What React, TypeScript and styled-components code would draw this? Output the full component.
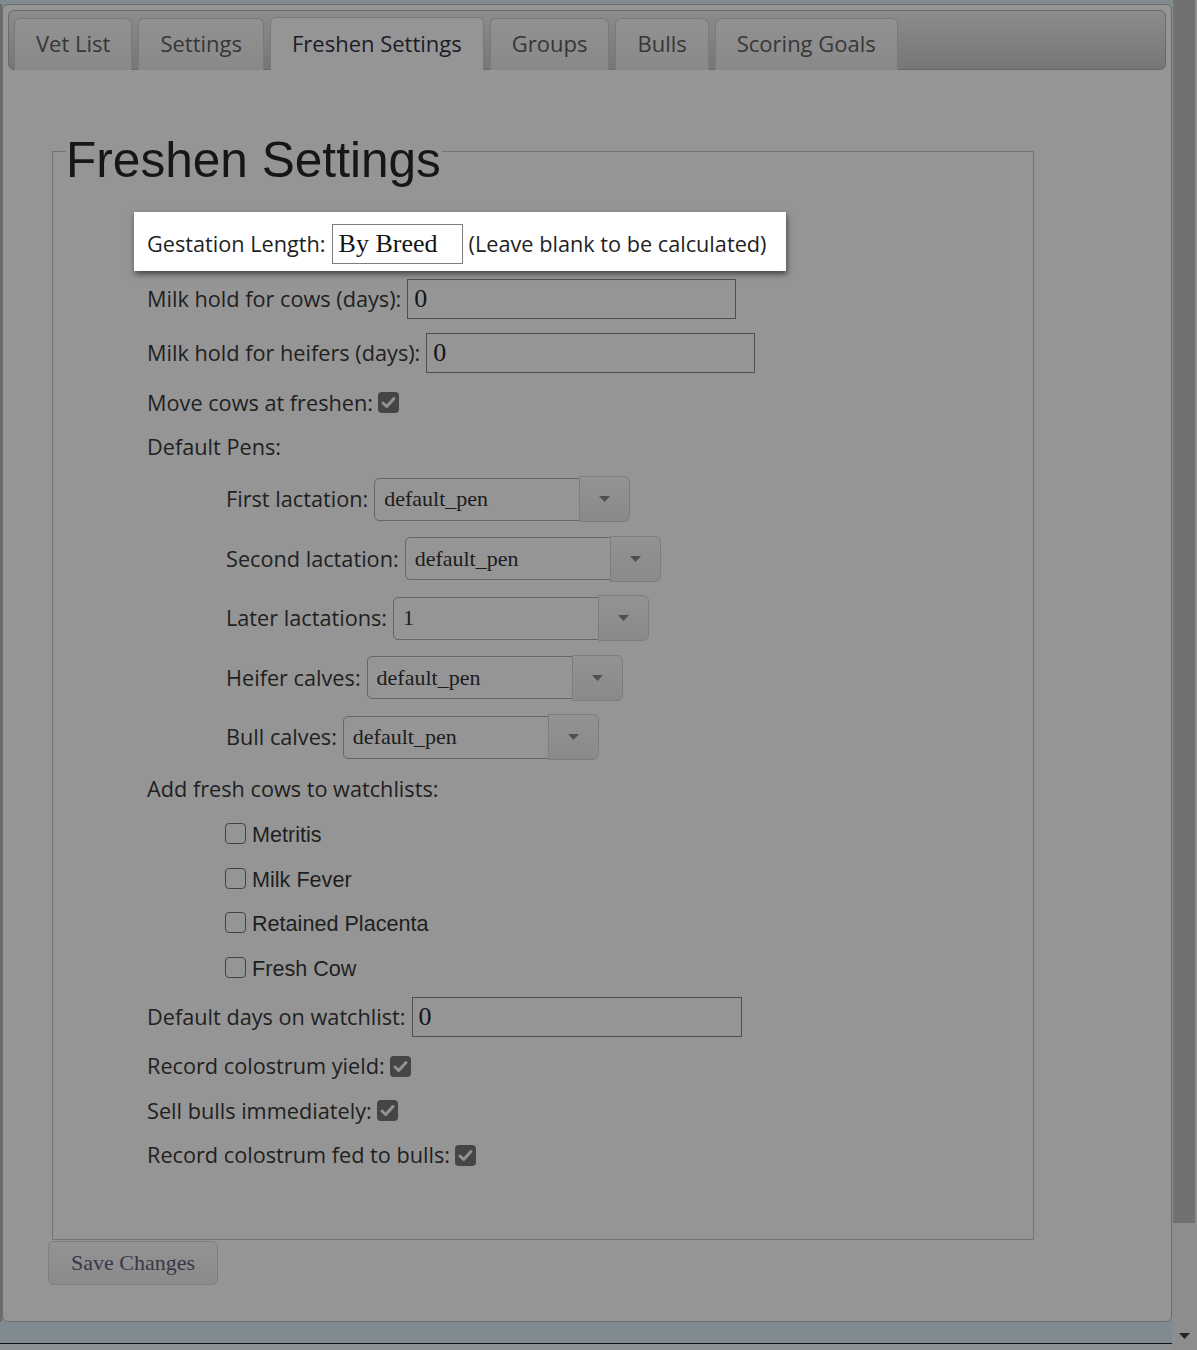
import React from 'react';
import styled, { createGlobalStyle } from 'styled-components';

const GlobalStyle = createGlobalStyle`
  html, body { margin: 0; padding: 0; }
  body {
    background: #808b91;
    font-family: "Open Sans", "Liberation Sans", sans-serif;
    overflow: hidden;
  }
  * { box-sizing: border-box; }
`;

const Screen = styled.div`
  display: grid;
  grid-template-columns: 1172px 25px;
  width: 1197px;
  height: 1350px;
`;

const MainColumn = styled.div`
  display: flex;
  flex-direction: column;
  padding-top: 4px;
`;

const DialogRow = styled.div`
  display: flex;
  height: 1318px;
`;

const LeftStrip = styled.div`
  width: 2px;
  background: #6b6b6b;
`;

const Dialog = styled.div`
  width: 1170px;
  border: 1px solid #6c6c6c;
  border-radius: 6px;
  background: #959595;
  padding: 5px;
  display: flex;
  flex-direction: column;
`;

const BottomGap = styled.div`
  height: 21px;
`;

const BottomLine = styled.div`
  height: 1px;
  background: #111;
`;

const BottomStub = styled.div`
  flex: 1;
  background: #8d9194;
`;

const Scrollbar = styled.div`
  display: flex;
  flex-direction: column;
  background: #8d8d8d;
`;

const Thumb = styled.div`
  height: 1223px;
  margin: 0 2px 0 1px;
  background: #717171;
`;

const ScrollRest = styled.div`
  flex: 1;
  display: flex;
  align-items: flex-end;
  justify-content: center;
  padding-bottom: 11px;
`;

const TabBar = styled.div`
  height: 60px;
  border: 1px solid #6a6a6a;
  border-radius: 6px;
  background: linear-gradient(#8c8c8c, #767676);
  display: flex;
  align-items: flex-end;
  gap: 6px;
  padding-left: 5px;
`;

const Tab = styled.div<{ $active?: boolean }>`
  height: ${(p) => (p.$active ? 53 : 52)}px;
  margin-bottom: -1px;
  padding: ${(p) => (p.$active ? '0 21px 3px' : '0 21px 4px')};
  border: 1px solid #7a7a7a;
  border-bottom: none;
  border-radius: 6px 6px 0 0;
  background: ${(p) => (p.$active ? '#959595' : 'linear-gradient(#919191, #898989)')};
  color: ${(p) => (p.$active ? '#1c1c28' : '#373737')};
  font-size: 22px;
  display: flex;
  align-items: center;
  white-space: nowrap;
`;

const Panel = styled.div`
  display: flex;
  flex-direction: column;
  align-items: flex-start;
  padding-left: 40px;
`;

const Fieldset = styled.fieldset`
  margin: 45.5px 0 0 4px;
  width: 982px;
  min-width: 0;
  padding: 0 0 0 13px;
  border: 1px solid #737373;
`;

const Legend = styled.legend`
  padding: 16px 1px 0 0;
  font-family: "Liberation Sans", Arial, sans-serif;
  font-size: 49.6px;
  line-height: 56px;
  color: #161616;
`;

const Form = styled.div`
  display: flex;
  flex-direction: column;
  align-items: flex-start;
  gap: 14.5px;
  padding: 36.5px 0 69px 81px;
`;

const Highlight = styled.div`
  display: flex;
  align-items: center;
  gap: 6px;
  height: 59px;
  margin: -12px 0 -7px -13px;
  padding: 5px 20px 0 13px;
  background: #fff;
  box-shadow: 1px 3px 6px rgba(0, 0, 0, 0.55);
`;

const TextRow = styled.div`
  display: flex;
  align-items: center;
  gap: 5px;
  height: 30px;
`;

const FieldRow = styled.div`
  display: flex;
  align-items: center;
  gap: 6px;
  height: 40px;
`;

const SelectRow = styled.div`
  display: flex;
  align-items: center;
  gap: 6px;
  height: 45px;
  padding-left: 79px;
`;

const CheckRow = styled.label`
  display: flex;
  align-items: center;
  gap: 6px;
  height: 30px;
  padding-left: 78px;
`;

const Label = styled.span`
  font-size: 21.7px;
  line-height: 30px;
  color: #1f1f1f;
  white-space: nowrap;
`;

const OptionText = styled.span`
  font-family: "Liberation Sans", Arial, sans-serif;
  font-size: 21.6px;
  color: #1f1f1f;
  white-space: nowrap;
  padding-top: 3px;
`;

const TextInput = styled.input<{ $w: number; $white?: boolean }>`
  width: ${(p) => p.$w}px;
  height: 40px;
  margin: 0;
  padding: 0 6px;
  border: 1px solid ${(p) => (p.$white ? '#7d7d7d' : '#4e4e4e')};
  background: ${(p) => (p.$white ? '#fff' : 'transparent')};
  font-family: "Liberation Serif", "Times New Roman", serif;
  font-size: 26px;
  color: #141414;
  outline: none;
`;

const SelectBox = styled.div`
  display: flex;
  align-items: center;
`;

const SelectValue = styled.div`
  width: 206px;
  height: 43px;
  border: 1px solid #666;
  border-radius: 5px 0 0 5px;
  padding-left: 9px;
  display: flex;
  align-items: center;
  font-family: "Liberation Serif", "Times New Roman", serif;
  font-size: 22px;
  color: #1c1c1c;
`;

const SelectButton = styled.div`
  width: 51px;
  height: 46px;
  margin-left: -1px;
  border: 1px solid #7d7d7d;
  border-radius: 0 6px 6px 0;
  background: linear-gradient(#939393, #8e8e8e 50%, #8a8a8a);
  display: flex;
  align-items: center;
  justify-content: center;
`;

const Box = styled.span<{ $checked?: boolean }>`
  width: 21px;
  height: 21px;
  flex: none;
  border-radius: 4px;
  display: inline-flex;
  align-items: center;
  justify-content: center;
  background: ${(p) => (p.$checked ? '#454545' : 'transparent')};
  border: ${(p) => (p.$checked ? 'none' : '1.5px solid #444')};
`;

const SaveButton = styled.button`
  margin: 1px 0 0 0;
  width: 170px;
  height: 44px;
  padding: 0;
  border: 1px solid #7e7e7e;
  border-radius: 6px;
  background: linear-gradient(#939393, #8b8b8b);
  font-family: "Liberation Serif", "Times New Roman", serif;
  font-size: 22px;
  color: #383848;
`;

const Caret = () => (
  <svg width="11" height="6" viewBox="0 0 11 6">
    <polygon points="0,0 11,0 5.5,6" fill="#4f4f4f" />
  </svg>
);

const CheckBox = ({ checked }: { checked?: boolean }) => (
  <Box $checked={checked}>
    {checked && (
      <svg width="21" height="21" viewBox="0 0 21 21">
        <polyline
          points="5,11 8.7,14.5 16,6.5"
          fill="none"
          stroke="#939393"
          strokeWidth="3"
          strokeLinecap="round"
          strokeLinejoin="round"
        />
      </svg>
    )}
  </Box>
);

const Select = ({ value }: { value: string }) => (
  <SelectBox>
    <SelectValue>{value}</SelectValue>
    <SelectButton>
      <Caret />
    </SelectButton>
  </SelectBox>
);

const tabs = ['Vet List', 'Settings', 'Freshen Settings', 'Groups', 'Bulls', 'Scoring Goals'];

const pens: [string, string][] = [
  ['First lactation:', 'default_pen'],
  ['Second lactation:', 'default_pen'],
  ['Later lactations:', '1'],
  ['Heifer calves:', 'default_pen'],
  ['Bull calves:', 'default_pen'],
];

const watchlists = ['Metritis', 'Milk Fever', 'Retained Placenta', 'Fresh Cow'];

export default function App() {
  return (
    <>
      <GlobalStyle />
      <Screen>
        <MainColumn>
          <DialogRow>
            <LeftStrip />
            <Dialog>
              <TabBar>
                {tabs.map((t) => (
                  <Tab key={t} $active={t === 'Freshen Settings'}>
                    {t}
                  </Tab>
                ))}
              </TabBar>
              <Panel>
                <Fieldset>
                  <Legend>Freshen Settings</Legend>
                  <Form>
                    <Highlight>
                      <Label>Gestation Length:</Label>
                      <TextInput $w={131} $white readOnly value="By Breed" />
                      <Label>(Leave blank to be calculated)</Label>
                    </Highlight>
                    <FieldRow>
                      <Label>Milk hold for cows (days):</Label>
                      <TextInput $w={329} readOnly value="0" />
                    </FieldRow>
                    <FieldRow>
                      <Label>Milk hold for heifers (days):</Label>
                      <TextInput $w={329} readOnly value="0" />
                    </FieldRow>
                    <TextRow>
                      <Label>Move cows at freshen:</Label>
                      <CheckBox checked />
                    </TextRow>
                    <TextRow>
                      <Label>Default Pens:</Label>
                    </TextRow>
                    {pens.map(([l, v]) => (
                      <SelectRow key={l}>
                        <Label>{l}</Label>
                        <Select value={v} />
                      </SelectRow>
                    ))}
                    <TextRow>
                      <Label>Add fresh cows to watchlists:</Label>
                    </TextRow>
                    {watchlists.map((w) => (
                      <CheckRow key={w}>
                        <CheckBox />
                        <OptionText>{w}</OptionText>
                      </CheckRow>
                    ))}
                    <FieldRow>
                      <Label>Default days on watchlist:</Label>
                      <TextInput $w={330} readOnly value="0" />
                    </FieldRow>
                    <TextRow>
                      <Label>Record colostrum yield:</Label>
                      <CheckBox checked />
                    </TextRow>
                    <TextRow>
                      <Label>Sell bulls immediately:</Label>
                      <CheckBox checked />
                    </TextRow>
                    <TextRow>
                      <Label>Record colostrum fed to bulls:</Label>
                      <CheckBox checked />
                    </TextRow>
                  </Form>
                </Fieldset>
                <SaveButton>Save Changes</SaveButton>
              </Panel>
            </Dialog>
          </DialogRow>
          <BottomGap />
          <BottomLine />
          <BottomStub />
        </MainColumn>
        <Scrollbar>
          <Thumb />
          <ScrollRest>
            <svg width="11" height="6" viewBox="0 0 11 6">
              <polygon points="0,0 11,0 5.5,6" fill="#262626" />
            </svg>
          </ScrollRest>
        </Scrollbar>
      </Screen>
    </>
  );
}
